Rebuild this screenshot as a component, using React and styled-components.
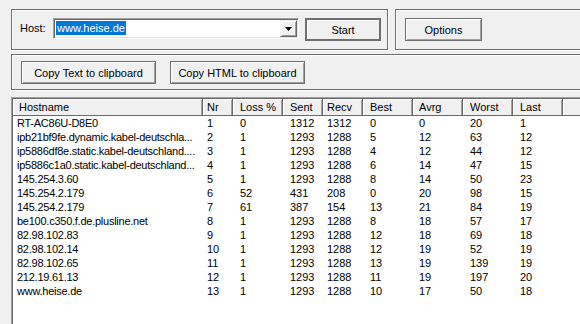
import React from 'react';
import styled, { createGlobalStyle } from 'styled-components';

const columns = [
  { label: 'Hostname', width: 190, pad: 4, headPad: 6, tight: true },
  { label: 'Nr', width: 30, pad: 4 },
  { label: 'Loss %', width: 50, pad: 7 },
  { label: 'Sent', width: 40, pad: 7 },
  { label: 'Recv', width: 40, pad: 4 },
  { label: 'Best', width: 50, pad: 7 },
  { label: 'Avrg', width: 50, pad: 6 },
  { label: 'Worst', width: 50, pad: 7 },
  { label: 'Last', width: 50, pad: 7 },
];

const hops = [
  ['RT-AC86U-D8E0', 1, 0, 1312, 1312, 0, 0, 20, 1],
  ['ipb21bf9fe.dynamic.kabel-deutschla...', 2, 1, 1293, 1288, 5, 12, 63, 12],
  ['ip5886df8e.static.kabel-deutschland....', 3, 1, 1293, 1288, 4, 12, 44, 12],
  ['ip5886c1a0.static.kabel-deutschland...', 4, 1, 1293, 1288, 6, 14, 47, 15],
  ['145.254.3.60', 5, 1, 1293, 1288, 8, 14, 50, 23],
  ['145.254.2.179', 6, 52, 431, 208, 0, 20, 98, 15],
  ['145.254.2.179', 7, 61, 387, 154, 13, 21, 84, 19],
  ['be100.c350.f.de.plusline.net', 8, 1, 1293, 1288, 8, 18, 57, 17],
  ['82.98.102.83', 9, 1, 1293, 1288, 12, 18, 69, 18],
  ['82.98.102.14', 10, 1, 1293, 1288, 12, 19, 52, 19],
  ['82.98.102.65', 11, 1, 1293, 1288, 13, 19, 139, 19],
  ['212.19.61.13', 12, 1, 1293, 1288, 11, 19, 197, 20],
  ['www.heise.de', 13, 1, 1293, 1288, 10, 17, 50, 18],
];

function App() {
  return (
    <>
      <GlobalStyle />
      <Window>
        <TopRow>
          <HostGroup>
            <HostLabel>Host:</HostLabel>
            <Combo>
              <Selected>www.heise.de</Selected>
              <DropButton>
                <svg width="7" height="4" viewBox="0 0 7 4">
                  <polygon points="0,0 7,0 3.5,4" fill="#000" />
                </svg>
              </DropButton>
            </Combo>
            <DefaultButton>Start</DefaultButton>
          </HostGroup>
          <OptionsGroup>
            <Button $width={77}>Options</Button>
          </OptionsGroup>
        </TopRow>
        <CopyGroup>
          <Button $width={135}>Copy Text to clipboard</Button>
          <Button $width={135}>Copy HTML to clipboard</Button>
        </CopyGroup>
        <List>
          <Header>
            {columns.map((c) => (
              <HeadCell key={c.label} $width={c.width} $pad={c.headPad ?? c.pad}>
                {c.label}
              </HeadCell>
            ))}
            <HeadFiller />
          </Header>
          {hops.map((row, i) => (
            <Row key={i}>
              {row.map((v, j) => (
                <Cell
                  key={j}
                  $width={columns[j].width}
                  $pad={columns[j].pad}
                  $tight={columns[j].tight}
                >
                  {v}
                </Cell>
              ))}
            </Row>
          ))}
        </List>
      </Window>
    </>
  );
}

export default App;

const GlobalStyle = createGlobalStyle`
  body {
    margin: 0;
    background: #f0f0f0;
    font-family: "Liberation Sans", Arial, sans-serif;
    font-size: 11px;
    color: #000;
  }
`;

const Window = styled.div`
  width: 580px;
  height: 324px;
  box-sizing: border-box;
  padding: 9px 0 0 11px;
  overflow: hidden;
  display: flex;
  flex-direction: column;
  background: #f0f0f0;
`;

const TopRow = styled.div`
  display: flex;
  gap: 7px;
  height: 41px;
  flex-shrink: 0;
`;

const GroupBox = styled.div`
  box-sizing: border-box;
  border: 1px solid #6e6e6e;
  box-shadow: inset 1px 1px 0 #fff, 1px 1px 0 #fff;
  display: flex;
  align-items: flex-start;
  flex-shrink: 0;
`;

const HostGroup = styled(GroupBox)`
  width: 377px;
  padding: 8px 0 0 8px;
`;

const OptionsGroup = styled(GroupBox)`
  width: 220px;
  padding: 8px 0 0 9px;
`;

const CopyGroup = styled(GroupBox)`
  width: 600px;
  height: 36px;
  margin-top: 4px;
  padding: 6px 0 0 9px;
  gap: 14px;
`;

const HostLabel = styled.span`
  width: 33px;
  line-height: 21px;
`;

const Combo = styled.div`
  position: relative;
  box-sizing: border-box;
  width: 246px;
  height: 21px;
  background: #fff;
  border-top: 1px solid #a0a0a0;
  border-left: 1px solid #a0a0a0;
  border-right: 1px solid #fff;
  border-bottom: 1px solid #fff;
  box-shadow: inset 1px 1px 0 #696969, inset -1px -1px 0 #e3e3e3;
  padding: 2px 0 0 2px;
`;

const Selected = styled.span`
  display: inline-block;
  background: #0078d7;
  color: #fff;
  line-height: 14px;
  padding: 0 1px;
`;

const DropButton = styled.div`
  position: absolute;
  right: 1px;
  top: 1px;
  width: 17px;
  height: 17px;
  box-sizing: border-box;
  background: #f0f0f0;
  border-top: 1px solid #f0f0f0;
  border-left: 1px solid #f0f0f0;
  border-right: 1px solid #696969;
  border-bottom: 1px solid #696969;
  box-shadow: inset 1px 1px 0 #fff, inset -1px -1px 0 #a0a0a0;
  display: flex;
  align-items: center;
  justify-content: center;
`;

const Button = styled.div`
  box-sizing: border-box;
  width: ${(p) => p.$width}px;
  height: 23px;
  border: 1px solid #6e6e6e;
  box-shadow: inset 1px 1px 0 #fff, inset -1px -1px 0 #a0a0a0;
  background: #f0f0f0;
  display: flex;
  align-items: center;
  justify-content: center;
  flex-shrink: 0;
`;

const DefaultButton = styled(Button)`
  width: 76px;
  margin-left: 6px;
  border: 2px solid #6e6e6e;
  box-shadow: inset 1px 1px 0 #fff;
`;

const List = styled.div`
  flex: 1;
  width: 600px;
  margin-top: 7px;
  background: #fff;
  border-top: 1px solid #a0a0a0;
  border-left: 1px solid #a0a0a0;
  box-shadow: inset 1px 1px 0 #696969;
  padding: 1px 0 0 1px;
`;

const Header = styled.div`
  display: flex;
  height: 16px;
  background: #f0f0f0;
  border-bottom: 1px solid #696969;
`;

const HeadCell = styled.div`
  box-sizing: border-box;
  width: ${(p) => p.$width}px;
  padding-left: ${(p) => p.$pad}px;
  border-right: 1px solid #696969;
  box-shadow: inset 1px 1px 0 #fff, inset -1px 0 0 #a0a0a0;
  line-height: 16px;
  white-space: nowrap;
  overflow: hidden;
  flex-shrink: 0;
`;

const HeadFiller = styled.div`
  flex: 1;
  box-shadow: inset 1px 1px 0 #fff;
`;

const Row = styled.div`
  display: flex;
  height: 14px;
  line-height: 14px;
`;

const Cell = styled.div`
  box-sizing: border-box;
  width: ${(p) => p.$width}px;
  padding-left: ${(p) => p.$pad}px;
  letter-spacing: ${(p) => (p.$tight ? '-0.25px' : 'normal')};
  white-space: nowrap;
  overflow: hidden;
  flex-shrink: 0;
`;
